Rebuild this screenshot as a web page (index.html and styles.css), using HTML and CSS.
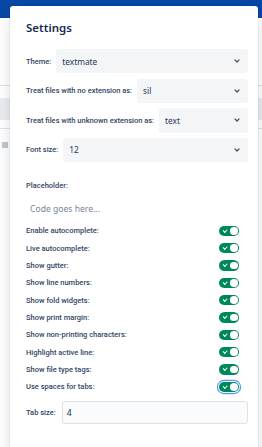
FILE: index.html
```html
<!DOCTYPE html>
<html lang="en">
<head>
    <meta charset="UTF-8">
    <title>Settings</title>
    <link rel="stylesheet" href="styles.css">
</head>
<body>
    <!-- Page behind the dialog -->
    <div class="page">
        <div class="topbar"></div>
        <div class="page-body">
            <div class="rule rule-first"></div>
            <div class="band"></div>
            <div class="rule"></div>
            <div class="page-icon"></div>
        </div>
    </div>

    <!-- Settings dialog -->
    <div class="modal">
        <h2 class="modal-title">Settings</h2>

        <div class="field-row">
            <label>Theme:</label>
            <div class="select">textmate<svg class="chevron" viewBox="0 0 6 4"><path d="M1 1l2 2 2-2"/></svg></div>
        </div>
        <div class="field-row">
            <label>Treat files with no extension as:</label>
            <div class="select">sil<svg class="chevron" viewBox="0 0 6 4"><path d="M1 1l2 2 2-2"/></svg></div>
        </div>
        <div class="field-row">
            <label>Treat files with unknown extension as:</label>
            <div class="select">text<svg class="chevron" viewBox="0 0 6 4"><path d="M1 1l2 2 2-2"/></svg></div>
        </div>
        <div class="field-row">
            <label>Font size:</label>
            <div class="select">12<svg class="chevron" viewBox="0 0 6 4"><path d="M1 1l2 2 2-2"/></svg></div>
        </div>

        <div class="placeholder-label">Placeholder:</div>
        <input class="placeholder-input" type="text" placeholder="Code goes here...">

        <div class="toggles">
            <div class="toggle-row"><span>Enable autocomplete:</span><span class="toggle"></span></div>
            <div class="toggle-row"><span>Live autocomplete:</span><span class="toggle"></span></div>
            <div class="toggle-row"><span>Show gutter:</span><span class="toggle"></span></div>
            <div class="toggle-row"><span>Show line numbers:</span><span class="toggle"></span></div>
            <div class="toggle-row"><span>Show fold widgets:</span><span class="toggle"></span></div>
            <div class="toggle-row"><span>Show print margin:</span><span class="toggle"></span></div>
            <div class="toggle-row"><span>Show non-printing characters:</span><span class="toggle"></span></div>
            <div class="toggle-row"><span>Highlight active line:</span><span class="toggle"></span></div>
            <div class="toggle-row"><span>Show file type tags:</span><span class="toggle"></span></div>
            <div class="toggle-row"><span>Use spaces for tabs:</span><span class="toggle focused"></span></div>
        </div>

        <div class="field-row tab-row">
            <label>Tab size:</label>
            <div class="text-input">4</div>
        </div>
    </div>
</body>
</html>
```

FILE: styles.css
```css
:root {
    --text-dark: #172b4d;
    --text-label: #42526e;
    --field-bg: #f4f5f7;
    --green: #00875a;
    --focus: #4c9aff;
}

* {
    margin: 0;
    padding: 0;
    box-sizing: border-box;
}

body {
    font-family: 'Noto Sans', 'Liberation Sans', sans-serif;
    background-color: #fff;
    overflow: hidden;
    height: 447px;
}

.topbar {
    height: 18px;
    background-color: #0747a6;
}

.page-body {
    padding-top: 67px;
}

.rule {
    height: 1px;
    background-color: #dfe1e6;
}

.rule-first {
    margin-bottom: 12px;
}

.band {
    height: 22px;
    background-color: #ebecf0;
    margin-bottom: 8px;
}

.page-icon {
    width: 6px;
    height: 6px;
    margin: 13px 0 0 2px;
    background-color: #c1c7d0;
}

.modal {
    position: absolute;
    left: 10px;
    top: 6px;
    width: 248px;
    height: 460px;
    background-color: #fff;
    border-radius: 3px;
    box-shadow: 0 0 1px rgba(9, 30, 66, 0.31), 0 8px 16px -4px rgba(9, 30, 66, 0.25);
    padding: 15px 10px 0 16px;
}

.modal-title {
    font-size: 11.5px;
    font-weight: 600;
    line-height: 14px;
    color: var(--text-dark);
    margin-bottom: 14px;
}

.field-row {
    display: flex;
    align-items: center;
    gap: 5px;
    margin-bottom: 5.2px;
}

.field-row label,
.placeholder-label,
.toggle-row span:first-child {
    font-family: Roboto, 'Noto Sans', sans-serif;
    font-size: 7.5px;
    font-weight: 500;
    color: #344563;
    white-space: nowrap;
}

.select {
    flex: 1;
    height: 24.4px;
    background-color: var(--field-bg);
    border-radius: 3px;
    display: flex;
    align-items: center;
    justify-content: space-between;
    padding: 0 8px 0 6px;
    font-size: 8.3px;
    color: #253858;
}

.chevron {
    width: 6px;
    height: 4px;
    fill: none;
    stroke: var(--text-label);
    stroke-width: 1.2;
    stroke-linecap: round;
    stroke-linejoin: round;
}

.placeholder-label {
    margin-top: 19px;
    line-height: 10px;
}

.placeholder-input {
    display: block;
    width: 100%;
    height: 22px;
    margin-top: 7px;
    border: none;
    outline: none;
    background: transparent;
    font-family: inherit;
    font-size: 8.6px;
    padding-left: 4px;
    color: var(--text-dark);
}

.placeholder-input::placeholder {
    color: #7a869a;
}

.toggles {
    margin-top: 2px;
}

.toggle-row {
    height: 17.35px;
    display: flex;
    align-items: center;
    justify-content: space-between;
    padding-right: 9px;
}

.toggle {
    position: relative;
    width: 20px;
    height: 10.5px;
    border-radius: 6px;
    background-color: var(--green);
}

/* white knob */
.toggle::after {
    content: '';
    position: absolute;
    right: 1.5px;
    top: 1.5px;
    width: 7.5px;
    height: 7.5px;
    border-radius: 50%;
    background-color: #fff;
}

/* check mark */
.toggle::before {
    content: '';
    position: absolute;
    left: 4px;
    top: 3px;
    width: 3px;
    height: 1.6px;
    border-left: 1px solid #fff;
    border-bottom: 1px solid #fff;
    transform: rotate(-45deg);
}

.toggle.focused {
    box-shadow: 0 0 0 1px #fff, 0 0 0 2.2px var(--focus);
}

.tab-row {
    margin-top: 5px;
    gap: 6px;
}

.text-input {
    flex: 1;
    height: 23px;
    border: 1.5px solid #dfe1e6;
    background-color: #fafbfc;
    border-radius: 3px;
    display: flex;
    align-items: center;
    padding-left: 4px;
    font-size: 8.5px;
    color: var(--text-dark);
}
```
